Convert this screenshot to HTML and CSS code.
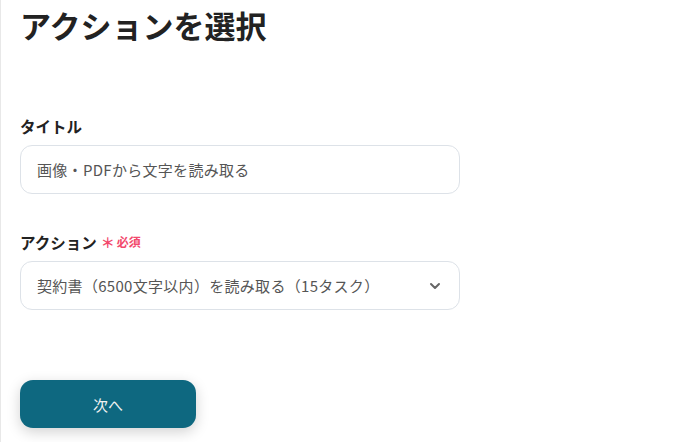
FILE: index.html
```html
<!DOCTYPE html>
<html lang="ja">
<head>
<meta charset="utf-8">
<link rel="stylesheet" href="styles.css">
</head>
<body>
<div class="page">
  <h1 class="title">アクションを選択</h1>
  <div class="field field-first">
    <div class="label">タイトル</div>
    <div class="input">画像・PDFから文字を読み取る</div>
  </div>
  <div class="field">
    <div class="label">アクション<span class="req"><span class="ast">＊</span>必須</span></div>
    <div class="input select">
      <span>契約書（6500文字以内）を読み取る（15タスク）</span>
      <svg class="chev" width="12" height="8" viewBox="0 0 12 8"><path d="M2 2 L6 6 L10 2" fill="none" stroke="#666" stroke-width="2" stroke-linecap="round" stroke-linejoin="round"/></svg>
    </div>
  </div>
  <button class="next">次へ</button>
</div>
</body>
</html>
```
FILE: styles.css
```css
html, body {
  margin: 0;
  padding: 0;
  background: #fff;
}
body {
  font-family: "Noto Sans CJK JP", "Noto Sans", sans-serif;
  color: #222;
}
.page {
  box-sizing: border-box;
  height: 442px;
  border-left: 1px solid #e8e8e8;
  padding: 0 19px;
  display: flex;
  flex-direction: column;
}
.title {
  margin: 0;
  font-size: 31px;
  font-weight: 700;
  line-height: 50px;
  color: #222;
}
.field {
  display: flex;
  flex-direction: column;
  width: 440px;
}
.field-first {
  margin-top: 65px;
}
.field + .field {
  margin-top: 37px;
}
.label {
  font-size: 15.5px;
  font-weight: 700;
  line-height: 22px;
  color: #222;
  margin-bottom: 8px;
  display: flex;
  align-items: center;
}
.req {
  color: #f2486c;
  font-size: 12px;
  font-weight: 700;
  margin-left: 4px;
  display: flex;
  align-items: center;
}
.ast {
  font-size: 14px;
  margin-right: 2px;
}
.input {
  box-sizing: border-box;
  height: 49px;
  border: 1px solid #dde2e8;
  border-radius: 12px;
  padding: 0 16px;
  display: flex;
  align-items: center;
  font-size: 15px;
  letter-spacing: 0.3px;
  color: #555;
}
.select {
  justify-content: space-between;
  padding-right: 18px;
}
.next {
  margin-top: 70px;
  width: 176px;
  height: 48px;
  border: none;
  border-radius: 13px;
  background: #0e6880;
  color: #f2f2f2;
  font-family: "Noto Sans CJK JP", "Noto Sans", sans-serif;
  font-size: 15px;
  box-shadow: 0 4px 14px rgba(0, 0, 0, 0.18);
  padding: 0;
}
```
